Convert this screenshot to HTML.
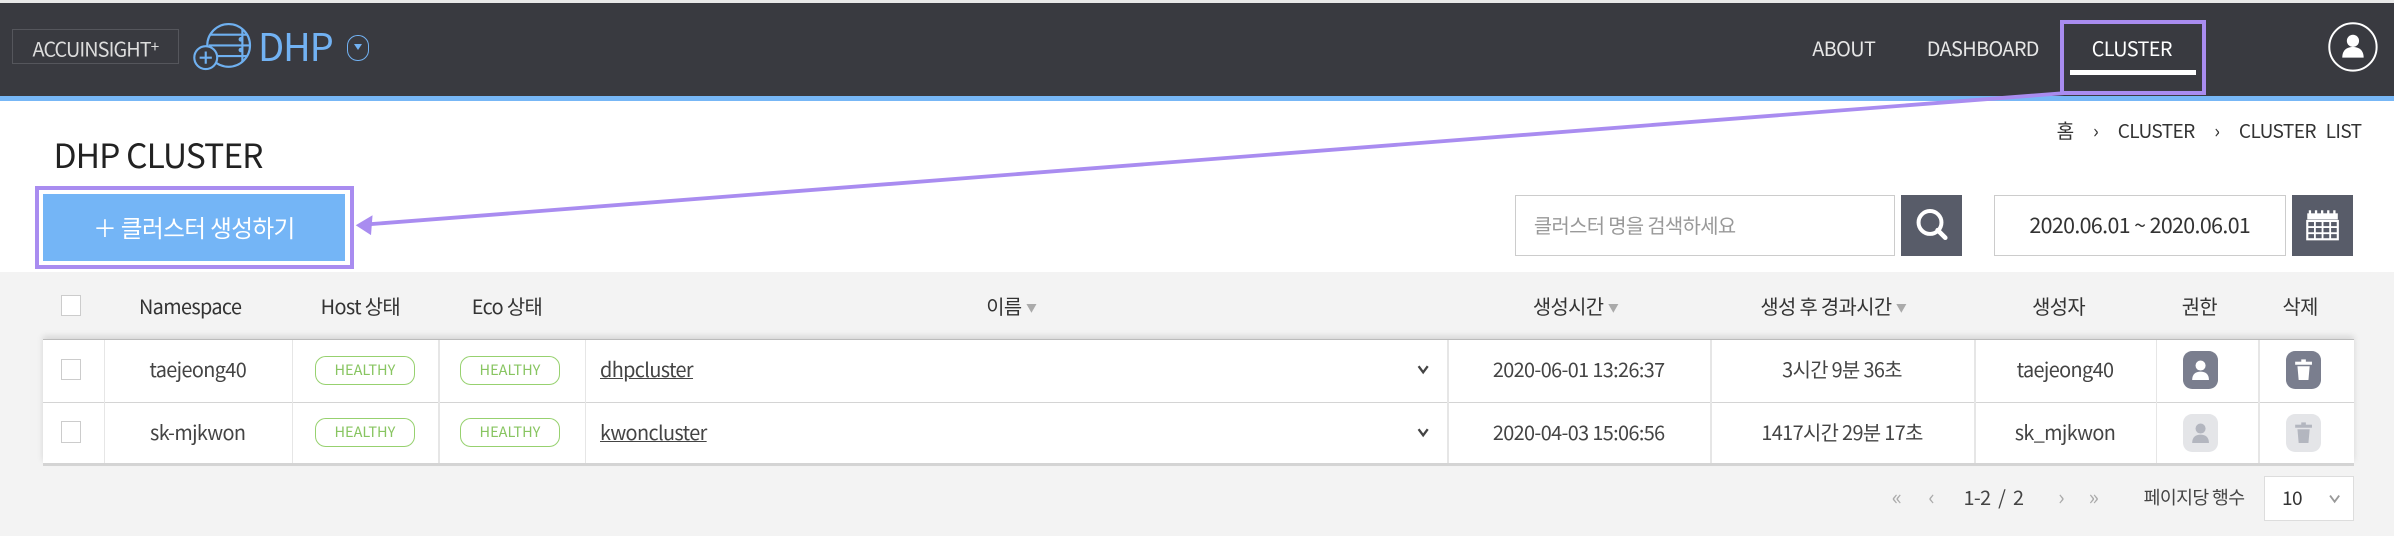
<!DOCTYPE html>
<html><head><meta charset="utf-8"><style>
*{box-sizing:border-box;margin:0;padding:0}
html,body{width:2394px;height:536px;overflow:hidden;background:#fff}
#w{zoom:1.52679;width:1568px;height:351px;position:relative;font-family:"Noto Sans CJK KR","Liberation Sans",sans-serif;color:#333;letter-spacing:-.4px}
.a{position:absolute}
.hdr{left:0;top:0;width:1568px;height:63px;background:#393a40;border-top:2px solid #e8e8e8}
.bl{left:0;top:63px;width:1568px;height:3px;background:#77b7f6}
.nav{color:#e6e6e6;font-size:13px;top:20px;line-height:22px}
.gray{left:0;top:178px;width:1568px;height:173px;background:#f3f3f3}
.th{top:178px;height:44px;line-height:44px;font-size:13px;color:#333}
.th span{font-size:7px;color:#aaa;margin-left:3px;vertical-align:1px}
.cb{width:13px;height:14px;border:1px solid #ccc;background:#fff}
.tbl{left:28px;top:222px;width:1514px;height:82px;background:#fff;border-top:1px solid #bbb;box-shadow:0 -2px 4px rgba(0,0,0,.12)}
.hl{left:28px;width:1514px;height:1px;background:#d4d4d4}
.vl{width:1px;background:#e6e6e6;top:223px;height:80px}
.td{font-size:13px;color:#444;text-align:center;height:20px;line-height:20px}
.r1{top:232px}.r2{top:273px}
.bd{width:66px;height:19px;border:1px solid #97d16f;border-radius:7px;color:#88c561;font-size:9.5px;text-align:center;line-height:17px;background:#fff;letter-spacing:0}
.lk{font-size:13px;color:#444;text-decoration:underline;line-height:20px}
.ib{width:23px;height:25px;border-radius:6px}
.chev{left:926px;width:12px;height:20px}
</style></head><body><div id="w">
<div class="a hdr"></div><div class="a bl"></div>
<div class="a" style="left:8px;top:19px;width:109px;height:23px;border:1px solid #55565c;color:#ddd;font-size:13px;line-height:21px;text-align:center;letter-spacing:-.6px">ACCUINSIGHT<span style="font-size:10px;vertical-align:3px">+</span></div>
<svg class="a" style="left:126px;top:14px" width="40" height="34" viewBox="0 0 40 34" fill="none" stroke="#6fb0f0" stroke-width="1.4"><circle cx="24" cy="16" r="14"/><path d="M12 9h24M11 16h27M12 23h24M33 5v22"/><circle cx="32" cy="12" r=".8"/><circle cx="32" cy="19" r=".8"/><circle cx="9" cy="24" r="7.5" fill="#393a40"/><path d="M9 20v8M5 24h8"/></svg>
<div class="a" style="left:169px;top:12px;font-size:25px;line-height:36px;color:#72b2f3;letter-spacing:-.8px">DHP</div>
<div class="a" style="left:227px;top:23px;width:15px;height:17px;border:1.3px solid #72b2f3;border-radius:7px"><div style="margin:5px auto 0;width:0;height:0;border-left:3px solid transparent;border-right:3px solid transparent;border-top:4px solid #72b2f3"></div></div>
<div class="a nav" style="left:1187px">ABOUT</div>
<div class="a nav" style="left:1262px">DASHBOARD</div>
<div class="a nav" style="left:1370px;color:#fff">CLUSTER</div>
<div class="a" style="left:1356px;top:46px;width:82px;height:3px;background:#fff"></div>
<div class="a" style="left:1349px;top:13px;width:96px;height:49px;border:3px solid #a98cf0"></div>
<svg class="a" style="left:1524px;top:14px" width="34" height="34" viewBox="0 0 34 34"><circle cx="17" cy="17" r="15.5" fill="none" stroke="#fff" stroke-width="1.3"/><circle cx="17" cy="13" r="4" fill="#fff"/><path d="M10 24c0-5 3-7 7-7s7 2 7 7z" fill="#fff"/></svg>
<div class="a" style="left:1347px;top:76px;font-size:12.5px;line-height:20px;color:#333;word-spacing:4px">홈 &nbsp;›&nbsp; CLUSTER &nbsp;›&nbsp; CLUSTER LIST</div>
<div class="a" style="left:35px;top:85px;font-size:22px;line-height:32px;color:#222;letter-spacing:-.6px">DHP CLUSTER</div>
<div class="a" style="left:23px;top:122px;width:209px;height:54px;border:3px solid #a98cf0"></div>
<div class="a" style="left:28px;top:127px;width:198px;height:44px;background:#74b5f6;color:#fff;font-size:15.5px;text-align:center;line-height:44px">＋ 클러스터 생성하기</div>
<div class="a" style="left:992px;top:128px;width:249px;height:40px;border:1px solid #ccc;color:#999;font-size:13px;line-height:38px;padding-left:12px">클러스터 명을 검색하세요</div>
<div class="a" style="left:1245px;top:128px;width:40px;height:40px;background:#585c69"><svg width="40" height="40"><circle cx="19" cy="18" r="7.5" fill="none" stroke="#fff" stroke-width="2.6"/><path d="M24 23l5 5" stroke="#fff" stroke-width="3" stroke-linecap="round"/></svg></div>
<div class="a" style="left:1306px;top:128px;width:191px;height:40px;border:1px solid #ccc;color:#333;font-size:14px;line-height:38px;text-align:center">2020.06.01 ~ 2020.06.01</div>
<div class="a" style="left:1501px;top:128px;width:40px;height:40px;background:#585c69"><svg width="40" height="40" fill="#fff"><rect x="10" y="12" width="20" height="4"/><rect x="11" y="10" width="1.5" height="3"/><rect x="15" y="10" width="1.5" height="3"/><rect x="19" y="10" width="1.5" height="3"/><rect x="23" y="10" width="1.5" height="3"/><rect x="27" y="10" width="1.5" height="3"/><rect x="10" y="17" width="20" height="12" fill="none" stroke="#fff" stroke-width="1.4"/><path d="M10 21h20M10 25h20M15 17v12M20 17v12M25 17v12" stroke="#fff" stroke-width="1.2"/></svg></div>
<div class="a gray"></div>
<div class="a cb" style="left:40px;top:193px"></div>
<div class="a th" style="left:91px">Namespace</div>
<div class="a th" style="left:210px">Host 상태</div>
<div class="a th" style="left:309px">Eco 상태</div>
<div class="a th" style="left:646px">이름<span>▼</span></div>
<div class="a th" style="left:1004px">생성시간<span>▼</span></div>
<div class="a th" style="left:1153px">생성 후 경과시간<span>▼</span></div>
<div class="a th" style="left:1331px">생성자</div>
<div class="a th" style="left:1429px">권한</div>
<div class="a th" style="left:1495px">삭제</div>
<div class="a tbl"></div>
<div class="a hl" style="top:263px"></div><div class="a hl" style="top:303px;height:2px"></div>
<div class="a vl" style="left:68px"></div><div class="a vl" style="left:191px"></div><div class="a vl" style="left:287px"></div><div class="a vl" style="left:383px"></div><div class="a vl" style="left:948px"></div><div class="a vl" style="left:1120px"></div><div class="a vl" style="left:1293px"></div><div class="a vl" style="left:1412px"></div><div class="a vl" style="left:1479px"></div>
<div class="a cb" style="left:40px;top:235px"></div><div class="a cb" style="left:40px;top:276px"></div>
<div class="a td r1" style="left:68px;width:123px">taejeong40</div>
<div class="a td r2" style="left:68px;width:123px">sk-mjkwon</div>
<div class="a bd" style="left:206px;top:233px">HEALTHY</div><div class="a bd" style="left:301px;top:233px">HEALTHY</div>
<div class="a bd" style="left:206px;top:274px">HEALTHY</div><div class="a bd" style="left:301px;top:274px">HEALTHY</div>
<div class="a lk r1" style="left:393px">dhpcluster</div>
<div class="a lk r2" style="left:393px">kwoncluster</div>
<svg class="a chev" style="top:232px" viewBox="0 0 12 20"><path d="M3 8l3 4 3-4" fill="none" stroke="#444" stroke-width="1.5"/></svg>
<svg class="a chev" style="top:273px" viewBox="0 0 12 20"><path d="M3 8l3 4 3-4" fill="none" stroke="#444" stroke-width="1.5"/></svg>
<div class="a td r1" style="left:948px;width:172px">2020-06-01 13:26:37</div>
<div class="a td r2" style="left:948px;width:172px">2020-04-03 15:06:56</div>
<div class="a td r1" style="left:1120px;width:173px">3시간 9분 36초</div>
<div class="a td r2" style="left:1120px;width:173px">1417시간 29분 17초</div>
<div class="a td r1" style="left:1293px;width:119px">taejeong40</div>
<div class="a td r2" style="left:1293px;width:119px">sk_mjkwon</div>
<div class="a ib" style="left:1430px;top:230px;background:#7a7e8e"><svg width="23" height="25"><circle cx="11.5" cy="9.5" r="3.3" fill="#fff"/><path d="M6 19c0-4 2.5-5.5 5.5-5.5s5.5 1.5 5.5 5.5z" fill="#fff"/></svg></div>
<div class="a ib" style="left:1497px;top:230px;background:#7a7e8e"><svg width="23" height="25" fill="#fff"><rect x="6" y="7" width="11" height="2"/><rect x="10" y="5.5" width="3" height="2"/><path d="M7.5 10h8l-.8 9h-6.4z"/></svg></div>
<div class="a ib" style="left:1430px;top:271px;background:#e4e5e8"><svg width="23" height="25"><circle cx="11.5" cy="9.5" r="3.3" fill="#b3b6bf"/><path d="M6 19c0-4 2.5-5.5 5.5-5.5s5.5 1.5 5.5 5.5z" fill="#b3b6bf"/></svg></div>
<div class="a ib" style="left:1497px;top:271px;background:#e4e5e8"><svg width="23" height="25" fill="#b3b6bf"><rect x="6" y="7" width="11" height="2"/><rect x="10" y="5.5" width="3" height="2"/><path d="M7.5 10h8l-.8 9h-6.4z"/></svg></div>
<div class="a" style="left:1239px;top:316px;font-size:14px;line-height:20px;color:#aaa">«</div>
<div class="a" style="left:1263px;top:316px;font-size:14px;line-height:20px;color:#aaa">‹</div>
<div class="a" style="left:1286px;top:316px;font-size:13px;line-height:20px;color:#444">1-2 &nbsp;/ &nbsp;2</div>
<div class="a" style="left:1348px;top:316px;font-size:14px;line-height:20px;color:#aaa">›</div>
<div class="a" style="left:1368px;top:316px;font-size:14px;line-height:20px;color:#aaa">»</div>
<div class="a" style="left:1404px;top:316px;font-size:12px;line-height:20px;color:#444">페이지당 행수</div>
<div class="a" style="left:1483px;top:312px;width:59px;height:29px;border:1px solid #ddd;background:#fff;font-size:12.5px;color:#333;line-height:27px;padding-left:11px">10<svg style="position:absolute;right:7px;top:9px" width="10" height="10"><path d="M2 3l3 4 3-4" fill="none" stroke="#999" stroke-width="1.2"/></svg></div>
<svg class="a" style="left:0;top:0" width="1568" height="351"><line x1="1352" y1="61" x2="240" y2="147" stroke="#a98cf0" stroke-width="2.5"/><path d="M233 147.5l11-6.5-1 13z" fill="#a98cf0"/></svg>
</div></body></html>
